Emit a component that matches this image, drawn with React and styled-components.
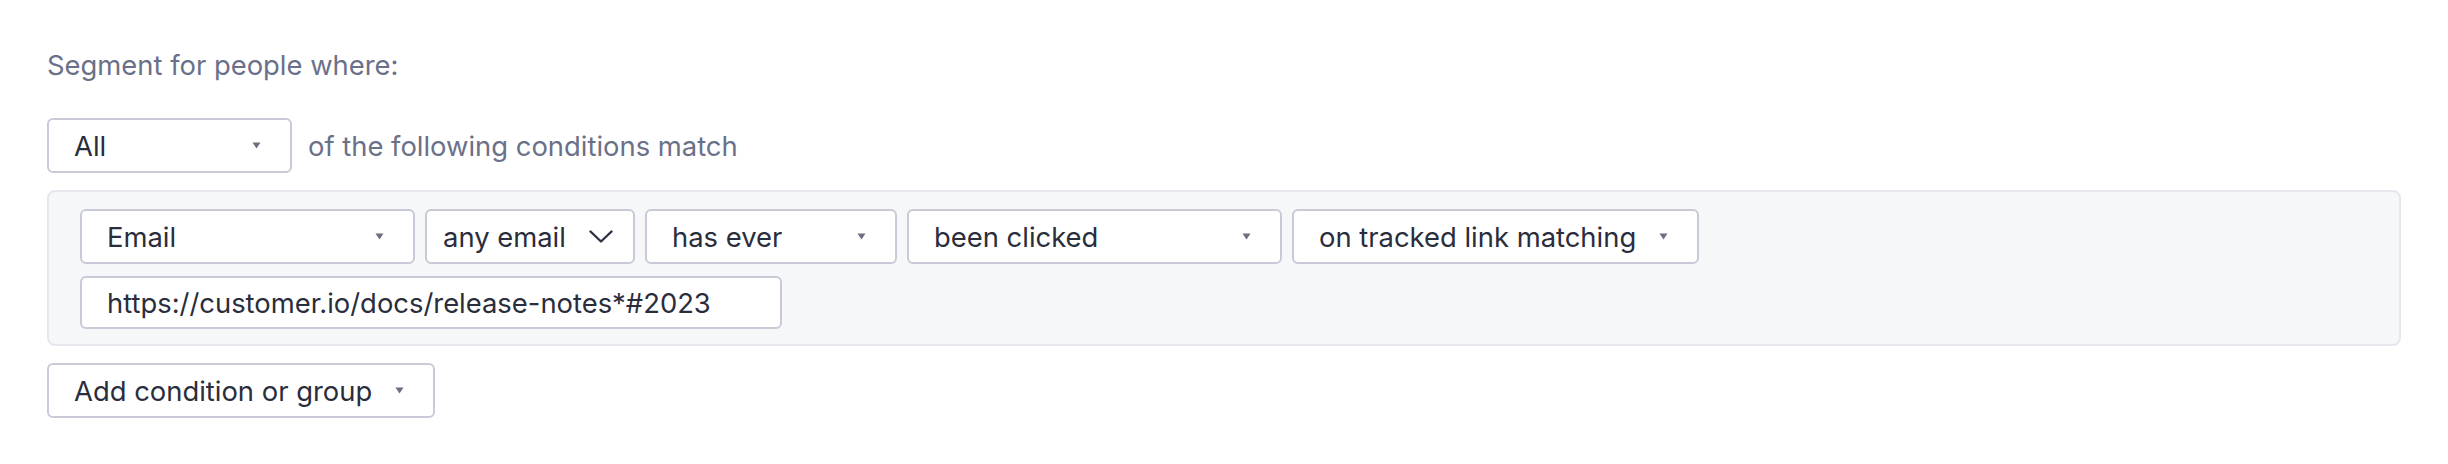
import styled, { createGlobalStyle } from "styled-components";

const GlobalStyle = createGlobalStyle`
  body {
    margin: 0;
    background: #ffffff;
    font-family: Inter, "Noto Sans", sans-serif;
  }
`;

const conditionFields = [
  { id: "field", label: "Email", width: 335 },
  { id: "scope", label: "any email", width: 210, chevron: true },
  { id: "when", label: "has ever", width: 252 },
  { id: "action", label: "been clicked", width: 375 },
  { id: "target", label: "on tracked link matching" },
];

const Caret = () => (
  <svg width="9" height="7" viewBox="0 0 9 7">
    <path d="M0.5 0.5h8L4.5 6.5z" fill="#6b6f80" />
  </svg>
);

const Chevron = () => (
  <svg width="24" height="13" viewBox="0 0 24 13">
    <path
      d="M1.5 1.5l10.5 10 10.5-10"
      fill="none"
      stroke="#2e3142"
      strokeWidth="2.4"
      strokeLinecap="round"
      strokeLinejoin="round"
    />
  </svg>
);

const Select = ({ label, width, chevron }) => (
  <SelectBox $width={width} $chevron={chevron}>
    <span>{label}</span>
    {chevron ? <Chevron /> : <Caret />}
  </SelectBox>
);

const App = () => {
  return (
    <>
      <GlobalStyle />
      <Wrapper>
        <Label>Segment for people where:</Label>

        <MatchRow>
          <Select label="All" width={245} />
          <Label>of the following conditions match</Label>
        </MatchRow>

        <Panel>
          <FieldRow>
            {conditionFields.map(({ id, label, width, chevron }) => (
              <Select key={id} label={label} width={width} chevron={chevron} />
            ))}
          </FieldRow>
          <FieldRow>
            <TextInput>https://customer.io/docs/release-notes*#2023</TextInput>
          </FieldRow>
        </Panel>

        <Select label="Add condition or group" />
      </Wrapper>
    </>
  );
};

export default App;

const Wrapper = styled.main`
  padding: 45px 47px 40px;
  display: flex;
  flex-direction: column;
  align-items: flex-start;
  font-size: 27.4px;
  color: #2a2d3c;
`;

const Label = styled.div`
  color: #6b7089;
  line-height: 40px;
`;

const MatchRow = styled.div`
  display: flex;
  align-items: center;
  gap: 16px;
  margin-top: 33px;
`;

const SelectBox = styled.div`
  box-sizing: border-box;
  height: 55px;
  width: ${({ $width }) => ($width ? `${$width}px` : "auto")};
  display: flex;
  align-items: center;
  justify-content: space-between;
  gap: 23px;
  padding: ${({ $chevron }) => ($chevron ? "0 28px 0 16px" : "0 29px 0 25px")};
  background: #ffffff;
  border: 2px solid #c9cad7;
  border-radius: 6px;
  color: #2a2d3c;
  white-space: nowrap;

  svg {
    flex-shrink: 0;
  }
`;

const Panel = styled.section`
  box-sizing: border-box;
  align-self: stretch;
  margin: 17px 0 17px;
  padding: 17px 31px 15px;
  display: flex;
  flex-direction: column;
  gap: 12px;
  background: #f6f7f9;
  border: 2px solid #e7e8ed;
  border-radius: 8px;
`;

const FieldRow = styled.div`
  display: flex;
  gap: 10px;
`;

const TextInput = styled.div`
  box-sizing: border-box;
  width: 702px;
  height: 53px;
  display: flex;
  align-items: center;
  padding: 0 25px;
  background: #ffffff;
  border: 2px solid #c9cad7;
  border-radius: 6px;
  color: #2a2d3c;
`;
